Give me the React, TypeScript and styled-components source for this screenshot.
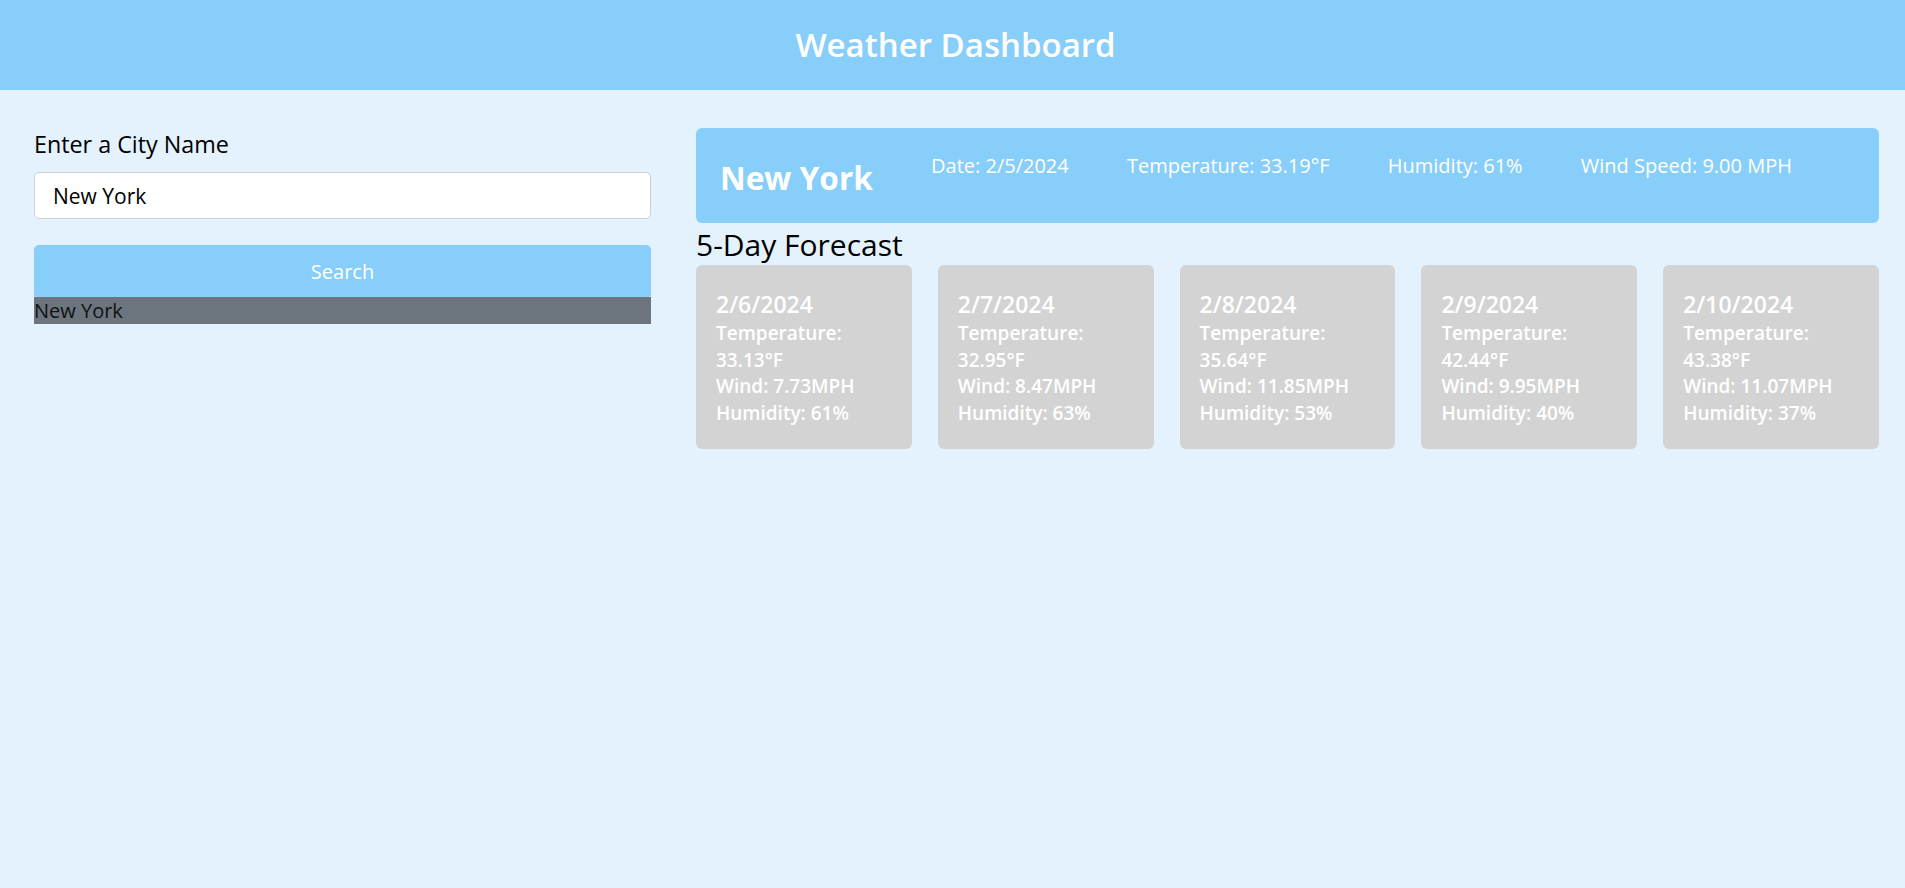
import React from "react";
import styled, { createGlobalStyle } from "styled-components";

const GlobalStyle = createGlobalStyle`
  html, body {
    margin: 0;
    padding: 0;
    background: #e3f2fd;
    font-family: "Open Sans", "Noto Sans", sans-serif;
    color: #000;
  }
  * { box-sizing: border-box; }
`;

const Header = styled.header`
  height: 90px;
  background: #87cefa;
  display: flex;
  align-items: center;
  justify-content: center;
`;

const Title = styled.h1`
  margin: 0 0 0 6px;
  font-size: 33px;
  line-height: 40px;
  font-weight: 600;
  color: #fff;
`;

const Main = styled.main`
  display: grid;
  grid-template-columns: 617px 1fr;
  column-gap: 45px;
  padding: 38px 26px 0 34px;
`;

const Sidebar = styled.aside`
  display: flex;
  flex-direction: column;
  padding-top: 2px;
`;

const Label = styled.label`
  font-size: 23.3px;
  line-height: 28px;
  font-weight: 500;
  margin-bottom: 14px;
`;

const CityInput = styled.input`
  height: 47px;
  width: 100%;
  border: 1px solid #cdd1d6;
  border-radius: 5px;
  background: #fff;
  padding: 0 18px;
  font-family: inherit;
  font-size: 21px;
  color: #000;
  outline: none;
`;

const SearchButton = styled.button`
  margin-top: 26px;
  height: 52px;
  width: 100%;
  border: none;
  border-radius: 5px 5px 2px 2px;
  background: #87cefa;
  color: #fff;
  font-family: inherit;
  font-size: 20px;
  cursor: pointer;
`;

const HistoryItem = styled.div`
  height: 27px;
  background: #6c757d;
  color: #111;
  font-size: 20px;
  line-height: 27px;
`;

const Content = styled.section`
  display: flex;
  flex-direction: column;
`;

const CurrentCard = styled.div`
  background: #87cefa;
  border-radius: 6px;
  height: 95px;
  padding: 23px 24px 0;
  display: flex;
  align-items: flex-start;
  gap: 58.2px;
  color: #fff;
`;

const CityName = styled.h2`
  margin: 8px 0 0;
  font-size: 31.6px;
  line-height: 38px;
  font-weight: 700;
`;

const Stat = styled.p`
  margin: 0;
  font-size: 20px;
  line-height: 30px;
`;

const SectionTitle = styled.h3`
  margin: 4px 0 3px;
  font-size: 30px;
  line-height: 35px;
  font-weight: 500;
`;

const ForecastGrid = styled.div`
  display: grid;
  grid-template-columns: repeat(5, 1fr);
  gap: 26px;
`;

const ForecastCard = styled.div`
  background: #d3d3d3;
  border-radius: 6px;
  padding: 25px 20px 22px;
  color: #fff;
`;

const ForecastDate = styled.h4`
  margin: 0 0 2px;
  font-size: 23px;
  line-height: 28px;
  font-weight: 600;
`;

const ForecastLine = styled.p`
  margin: 0;
  font-size: 19px;
  line-height: 26.7px;
  font-weight: 600;
`;

const forecast = [
  { date: "2/6/2024", temp: "33.13", wind: "7.73", hum: "61" },
  { date: "2/7/2024", temp: "32.95", wind: "8.47", hum: "63" },
  { date: "2/8/2024", temp: "35.64", wind: "11.85", hum: "53" },
  { date: "2/9/2024", temp: "42.44", wind: "9.95", hum: "40" },
  { date: "2/10/2024", temp: "43.38", wind: "11.07", hum: "37" },
];

export default function App() {
  return (
    <>
      <GlobalStyle />
      <Header>
        <Title>Weather Dashboard</Title>
      </Header>
      <Main>
        <Sidebar>
          <Label htmlFor="city">Enter a City Name</Label>
          <CityInput id="city" defaultValue="New York" />
          <SearchButton>Search</SearchButton>
          <HistoryItem>New York</HistoryItem>
        </Sidebar>
        <Content>
          <CurrentCard>
            <CityName>New York</CityName>
            <Stat>Date: 2/5/2024</Stat>
            <Stat>Temperature: 33.19°F</Stat>
            <Stat>Humidity: 61%</Stat>
            <Stat>Wind Speed: 9.00 MPH</Stat>
          </CurrentCard>
          <SectionTitle>5-Day Forecast</SectionTitle>
          <ForecastGrid>
            {forecast.map((d) => (
              <ForecastCard key={d.date}>
                <ForecastDate>{d.date}</ForecastDate>
                <ForecastLine>Temperature: {d.temp}°F</ForecastLine>
                <ForecastLine>Wind: {d.wind}MPH</ForecastLine>
                <ForecastLine>Humidity: {d.hum}%</ForecastLine>
              </ForecastCard>
            ))}
          </ForecastGrid>
        </Content>
      </Main>
    </>
  );
}
